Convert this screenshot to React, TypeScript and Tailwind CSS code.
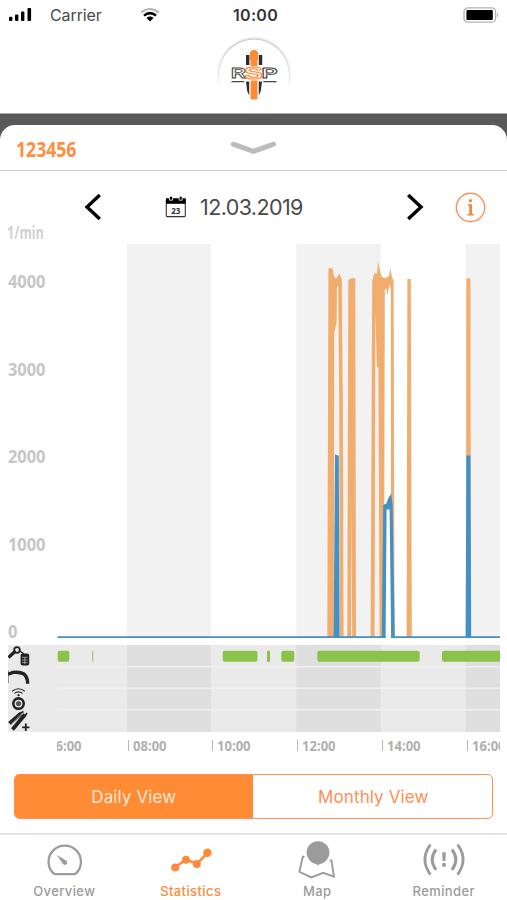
import { ReactNode } from 'react';
import clsx from 'clsx';

type Range = { x: number; width: number };

const yLabels = ['4000', '3000', '2000', '1000', '0'];
const timeLabels = ['08:00', '10:00', '12:00', '14:00', '16:00'];

const shadedHours: Range[] = [
    { x: 127, width: 84 },
    { x: 296.3, width: 84.4 },
    { x: 465.7, width: 34.3 }
];

const ignitionPeriods: Range[] = [
    { x: 57.7, width: 11.6 },
    { x: 92.2, width: 1 },
    { x: 222.7, width: 34.8 },
    { x: 267, width: 3 },
    { x: 281.3, width: 13 },
    { x: 317.3, width: 102.4 },
    { x: 442, width: 60 }
];

const engineShapes = [
    'M327.3 638 L328.4 268.5 L332.4 268 L334 276 L336 279 L339.3 273.5 L341.8 279 L342.8 400 L343.6 638 L339.8 638 L339.2 400 L338.2 286 L337 286 L336.6 322 L334.2 333 L333.8 638Z',
    'M347.3 638 L348.3 280 L351 278.5 L355.3 278 L356 638 L352.2 638 L351.6 500 L351 638Z',
    'M370.6 638 L372.2 281 L374.4 273 L377 274 L378 261 L380 271 L381.8 277 L386 278 L389 276 L390.4 268.5 L392 277 L393.6 281 L394.6 638 L391 638 L390.8 290 L389.4 284 L387.4 295 L386.2 288 L384.8 290 L384 638 L379.6 638 L378.4 368 L376.8 366 L375.4 310 L374.6 638Z',
    'M406.6 638 L407.4 279 L410.8 279 L411.8 638Z',
    'M466 638 L466.4 278.5 L470.4 278.5 L471 638Z'
];

const workShapes = [
    'M333.6 638 L335 454.5 L338.8 455.8 L339.6 638Z',
    'M381.8 638 L383.2 505 L386.4 503.5 L388.4 498 L391.2 493.5 L392.6 505 L394.8 638 L391.2 638 L389.6 509.6 L386.6 509.6 L385.6 638Z',
    'M465.6 638 L466.4 455.4 L470.4 455.4 L471.2 638Z'
];

function StatusBar() {
    return (
        <div className="grid h-[30px] grid-cols-[1fr_auto_1fr] items-center pl-2 pr-[7px] text-[16px] text-[#333]">
            <div className="flex items-center">
                <svg width="24" height="14" viewBox="0 0 24 14" fill="#000">
                    <rect x="1" y="8.8" width="3.4" height="4.2" rx="1" />
                    <rect x="7" y="6.4" width="3.4" height="6.6" rx="1" />
                    <rect x="13" y="3.6" width="3.4" height="9.4" rx="1" />
                    <rect x="19.5" y="0" width="3.6" height="13" rx="1" />
                </svg>
                <span className="ml-[18px] w-[53px] tracking-[-0.1px] text-[#4a4a4a]">Carrier</span>
                <svg className="ml-[37px]" width="20" height="14" viewBox="0 0 20 14" fill="none">
                    <path d="M1.2 4.4 Q10 -2.4 18.8 4.4" stroke="#b5b5b5" strokeWidth="2" />
                    <path d="M4 7.6 Q10 2.6 16 7.6" stroke="#000" strokeWidth="2.5" />
                    <path d="M6.5 10 Q10 7.2 13.5 10 L10 13.4Z" fill="#000" />
                </svg>
            </div>
            <span className="pl-[3px] font-semibold tracking-[0.3px]">10:00</span>
            <svg className="justify-self-end" width="37" height="16" viewBox="0 0 37 16">
                <rect x="1" y="0.8" width="31.6" height="14.4" rx="4" fill="#fff" stroke="#b3b3b3" strokeWidth="1.3" />
                <rect x="3.4" y="3" width="26.4" height="10" rx="1" fill="#000" />
                <path d="M34.2 5.6 Q36.4 8 34.2 10.4Z" fill="#aaa" />
            </svg>
        </div>
    );
}

function Logo() {
    return (
        <svg width="84" height="82" viewBox="212 31 84 82">
            <defs>
                <radialGradient id="ring">
                    <stop offset="88%" stopColor="#b4b4b4" />
                    <stop offset="100%" stopColor="#fff" stopOpacity="0" />
                </radialGradient>
            </defs>
            <circle cx="254" cy="73.5" r="38" fill="url(#ring)" />
            <circle cx="254" cy="74.3" r="34.8" fill="#fff" />
            <circle cx="254" cy="78" r="35" fill="#fff" />
            <path d="M251.4 99.5 V60 H250 V54 L249.4 53 L252.4 50 H255.6 L258.6 53 L258 54 V60 H256.6 V99.5Z" fill="#ff8c35" />
            <path d="M250.5 56 H257.5 V99 H250.5Z" fill="#ff8c35" />
            <path d="M246 55 H249.4 V65 H246Z M258.8 55 H262.2 V65 H258.8Z" fill="#2b2b33" />
            <path d="M246 81.5 H249.2 V95.5 L247.2 91Z M258.8 81.5 H262 L260.8 91 L258.8 95.5Z" fill="#2b2b33" />
            <rect x="244.6" y="66" width="18.4" height="14.5" fill="#fff" />
            <g fontFamily="Liberation Sans" fontWeight="700" fontStyle="normal" fill="#fff">
                <text x="231" y="77.6" fontSize="14" textLength="15" lengthAdjust="spacingAndGlyphs" stroke="#444" strokeWidth="0.8">R</text>
                <text x="261.6" y="77.6" fontSize="14" textLength="16" lengthAdjust="spacingAndGlyphs" stroke="#444" strokeWidth="0.8">P</text>
                <text x="244" y="79" fontSize="16.5" textLength="19" lengthAdjust="spacingAndGlyphs" stroke="#ff8c35" strokeWidth="1">S</text>
            </g>
            <path d="M231.5 81.6 H244.3 M263.3 81.6 H276.5" stroke="#444" strokeWidth="1.1" />
        </svg>
    );
}

function DateNav() {
    return (
        <div className="flex h-[53px] items-center pl-[84px] pr-[21px] pt-[19px]">
            <svg width="18" height="28" viewBox="0 0 18 28" fill="none" stroke="#000" strokeWidth="3.4">
                <path d="M15.8 2 L3 14 L15.8 26" />
            </svg>
            <svg className="ml-[63px]" width="22" height="22" viewBox="0 0 22 22">
                <rect x="1.3" y="3" width="19" height="17.6" rx="0.8" fill="#fff" stroke="#333" strokeWidth="1.1" />
                <rect x="1" y="2.4" width="19.6" height="5.4" fill="#000" />
                <path d="M4.5 0.8 V4.2 H7.5 V0.8 M14.2 0.8 V4.2 H17.2 V0.8" fill="#000" stroke="#fff" strokeWidth="0.8" />
                <text x="10.8" y="17.6" textAnchor="middle" fontSize="8" fontWeight="700" fontFamily="Noto Sans" fill="#333">23</text>
            </svg>
            <span className="ml-[13px] w-[119px] whitespace-nowrap text-[21.5px] tracking-[-0.6px] text-[#4a4a4a]">12.03.2019</span>
            <svg className="ml-auto" width="18" height="28" viewBox="0 0 18 28" fill="none" stroke="#000" strokeWidth="3.4">
                <path d="M2.2 2 L15 14 L2.2 26" />
            </svg>
            <svg className="ml-[31px]" width="31" height="31" viewBox="0 0 31 31">
                <circle cx="15.5" cy="15.5" r="14.2" fill="none" stroke="#ff8f57" strokeWidth="1.4" />
                <circle cx="15.4" cy="8.7" r="1.7" fill="#f5873f" />
                <path d="M12.8 12.3 H17 V22 H18.8 V23.4 H12.4 V22 H14.2 V13.7 H12.8Z" fill="#f5873f" />
            </svg>
        </div>
    );
}

function Chart() {
    return (
        <svg className="shrink-0" width="443" height="395" viewBox="57 244 443 395">
            {shadedHours.map((band) => (
                <rect key={band.x} x={band.x} y="244" width={band.width} height="394" fill="#f2f2f2" />
            ))}
            {engineShapes.map((d) => <path key={d} d={d} fill="#f1ad6d" />)}
            {workShapes.map((d) => <path key={d} d={d} fill="#4190c6" />)}
            <path d="M57.5 637.2 H385.6 M391.2 637.2 H500" stroke="#4190c6" strokeWidth="1.8" />
        </svg>
    );
}

function StatusRows() {
    return (
        <div className="ml-2 mt-[6px] flex h-[87px] w-[492px] bg-[#eaeaea]">
            <svg className="shrink-0" width="49" height="87" viewBox="8 645 49 87" fill="none" stroke="#222">
                {/* key with fob */}
                <path d="M8.5 657.5 L15.5 651" strokeWidth="3.2" />
                <circle cx="17" cy="650" r="2.8" strokeWidth="1.8" />
                <path d="M19 650.5 L24 654" strokeWidth="1.4" />
                <rect x="20.6" y="653.6" width="8.6" height="12" rx="2" fill="#222" stroke="none" />
                <path d="M22 657.3 H27.6 M22 660 H27.6 M22 662.6 H27.6 M24.8 657 V664" stroke="#bbb" strokeWidth="0.7" />
                {/* bent boom */}
                <path d="M8 674.2 L13 672.4 Q20 671.6 24 674 Q27.8 677.5 27.6 683.8" strokeWidth="3.4" />
                <path d="M8 670.5 V683" strokeWidth="0.8" />
                {/* sensor wheel */}
                <path d="M12.2 691.2 Q18.5 686.4 24.8 691.2 M14.4 693.4 Q18.5 690.4 22.6 693.4" strokeWidth="1.1" />
                <circle cx="18.5" cy="695.2" r="1.1" fill="#222" stroke="none" />
                <circle cx="18.5" cy="703.6" r="5.2" strokeWidth="2.6" />
                <circle cx="18.5" cy="703.6" r="2.2" fill="#555" strokeWidth="0.6" />
                {/* shock absorbers */}
                <path d="M9.5 723.5 L21 713.5" strokeWidth="4" />
                <path d="M12.5 729.5 L25 714.5" strokeWidth="3.8" />
                <path d="M11 724.6 L23 712.6" stroke="#ccc" strokeWidth="0.9" />
                <path d="M20 713.5 L23.5 711.5 M25 716 L27 713" strokeWidth="1.6" />
                <path d="M25.8 723.6 V731 M22.2 727.4 H29.4" strokeWidth="1.8" />
            </svg>
            <svg className="shrink-0" width="443" height="87" viewBox="57 645 443 87">
                {shadedHours.map((band) => (
                    <rect key={band.x} x={band.x} y="645" width={band.width} height="87" fill="#dfdfdf" />
                ))}
                <path d="M57 666.8 H500 M57 688.2 H500 M57 709.8 H500" stroke="#f1f1f1" strokeWidth="1.4" />
                {ignitionPeriods.map((p) => (
                    <rect key={p.x} x={p.x} y="650.7" width={p.width} height="11" rx={p.width > 8 ? 2 : 0.4} fill="#8bc34a" />
                ))}
            </svg>
        </div>
    );
}

function TimeAxis() {
    return (
        <div className="ml-[57px] flex h-[26px] w-[443px] items-center overflow-hidden font-['Open_Sans'] text-[15px] font-bold text-[#b0b0b0]">
            <div className="flex w-[70.6px] shrink-0 overflow-hidden">
                <span className="-ml-[9px] origin-left scale-x-[0.87]">06:00</span>
            </div>
            {timeLabels.map((label) => (
                <div key={label} className="flex w-[84.8px] shrink-0 items-center">
                    <span className="h-[11px] w-px bg-[#b8b8b8]" />
                    <span className="ml-[4px] origin-left scale-x-[0.87]">{label}</span>
                </div>
            ))}
        </div>
    );
}

function Tab({ label, active, children }: { label: string; active?: boolean; children: ReactNode }) {
    return (
        <div className={clsx('flex flex-1 flex-col items-center pt-[5px]', active ? 'text-[#ff8a3c]' : 'text-[#9b9b9b]')}>
            <svg width="46" height="42" viewBox="0 0 46 42" fill="none" stroke="currentColor">{children}</svg>
            <span className="text-[13px] leading-[18px] font-medium tracking-[0.4px]">{label}</span>
        </div>
    );
}

function TabBar() {
    return (
        <nav className="flex h-[67px] border-t-2 border-[#e4e4e4] pl-px">
            <Tab label="Overview">
                <path d="M12.5 33.4 A16.2 16.2 0 1 1 35 33.4 Q34.2 34.2 33 34.2 H14.5 Q13.3 34.2 12.5 33.4Z" strokeWidth="2.3" />
                <path d="M15.8 15 L25 20.4 Q27.2 22.4 25.6 24.2 Q23.6 25.8 21.8 23.8Z" fill="currentColor" stroke="none" />
            </Tab>
            <Tab label="Statistics" active>
                <path d="M7 27.5 L18 19.5 L29 23.8 L39.5 13" strokeWidth="2.6" />
                <g fill="currentColor" stroke="none">
                    <circle cx="7.2" cy="27.5" r="4" />
                    <circle cx="18" cy="19.8" r="4" />
                    <circle cx="28.8" cy="24" r="4" />
                    <circle cx="39.4" cy="12.8" r="4.2" />
                </g>
            </Tab>
            <Tab label="Map">
                <circle cx="24" cy="12.6" r="11.4" fill="currentColor" stroke="none" />
                <path d="M20 22 L24 25.6 L28 22Z" fill="currentColor" stroke="none" />
                <path d="M10.4 17 L8.8 16.6 L5.4 31.8 L17.4 37.4 L29.2 32.8 L40 36.6 L37.4 20.4 L35.6 20.4" strokeWidth="1.9" />
            </Tab>
            <Tab label="Reminder">
                <path d="M9.4 4.6 Q-1.6 19.6 9.4 34.6 M36.6 4.6 Q47.6 19.6 36.6 34.6" strokeWidth="2.8" />
                <path d="M15 9.5 Q7.4 19.6 15 29.8 M31 9.5 Q38.6 19.6 31 29.8" strokeWidth="3" />
                <path d="M21.2 12.2 H24.8 L24.4 21 H21.6Z" fill="currentColor" stroke="none" />
                <rect x="21.1" y="23" width="3.8" height="3.8" rx="1" fill="currentColor" stroke="none" />
            </Tab>
        </nav>
    );
}

export default function App() {
    return (
        <div className="flex h-[900px] w-[507px] flex-col overflow-hidden bg-white font-['Inter',sans-serif]">
            <StatusBar />
            <div className="flex h-[83px] items-start justify-center pt-px">
                <Logo />
            </div>

            <div className="h-[58px] border-t border-[#aaa] bg-[#595959] pt-[11px]">
                <div className="flex h-[46px] items-center justify-between rounded-t-[15px] border-b-[1.5px] border-[#cfcfcf] bg-white pl-4">
                    <span className="w-[215px] origin-left scale-x-[0.8] font-['Open_Sans'] text-[22px] leading-none font-bold text-[#ff8f3d]">123456</span>
                    <svg className="mt-[2px] mr-[230px]" width="47" height="17" viewBox="0 0 47 17" fill="none">
                        <path d="M3.2 4.2 L23.5 11.4 L43.8 4.2" stroke="#bcbcbc" strokeWidth="5" strokeLinecap="round" strokeLinejoin="round" />
                    </svg>
                </div>
            </div>

            <DateNav />

            <div className="flex h-5 items-center pb-[4px] pl-[7px]">
                <span className="origin-left scale-x-[0.74] font-['Open_Sans'] text-[17px] leading-none font-bold text-[#d2d2d2]">1/min</span>
            </div>
            <div className="flex h-[395px]">
                <div className="-mt-[6px] w-[57px] shrink-0 pl-[7.5px] font-['Open_Sans'] text-[18px] font-bold text-[#c6c6c6]">
                    {yLabels.map((label) => (
                        <div key={label} className="flex h-[87.5px] origin-left scale-x-[0.91] items-center">{label}</div>
                    ))}
                </div>
                <Chart />
            </div>
            <StatusRows />
            <TimeAxis />

            <div className="mx-[14px] mt-[16px] flex h-[45px] shrink-0 overflow-hidden rounded-[5px] border-[1.5px] border-[#ff8f55] text-[17px] tracking-[0.1px]">
                <button className="flex-1 bg-[#ff8c35] pt-[2px] text-[#ffe6d6]">Daily View</button>
                <button className="flex-1 pt-[2px] pl-[2px] text-[#ff8f55]">Monthly View</button>
            </div>
            <div className="flex-1" />
            <TabBar />
        </div>
    );
}
